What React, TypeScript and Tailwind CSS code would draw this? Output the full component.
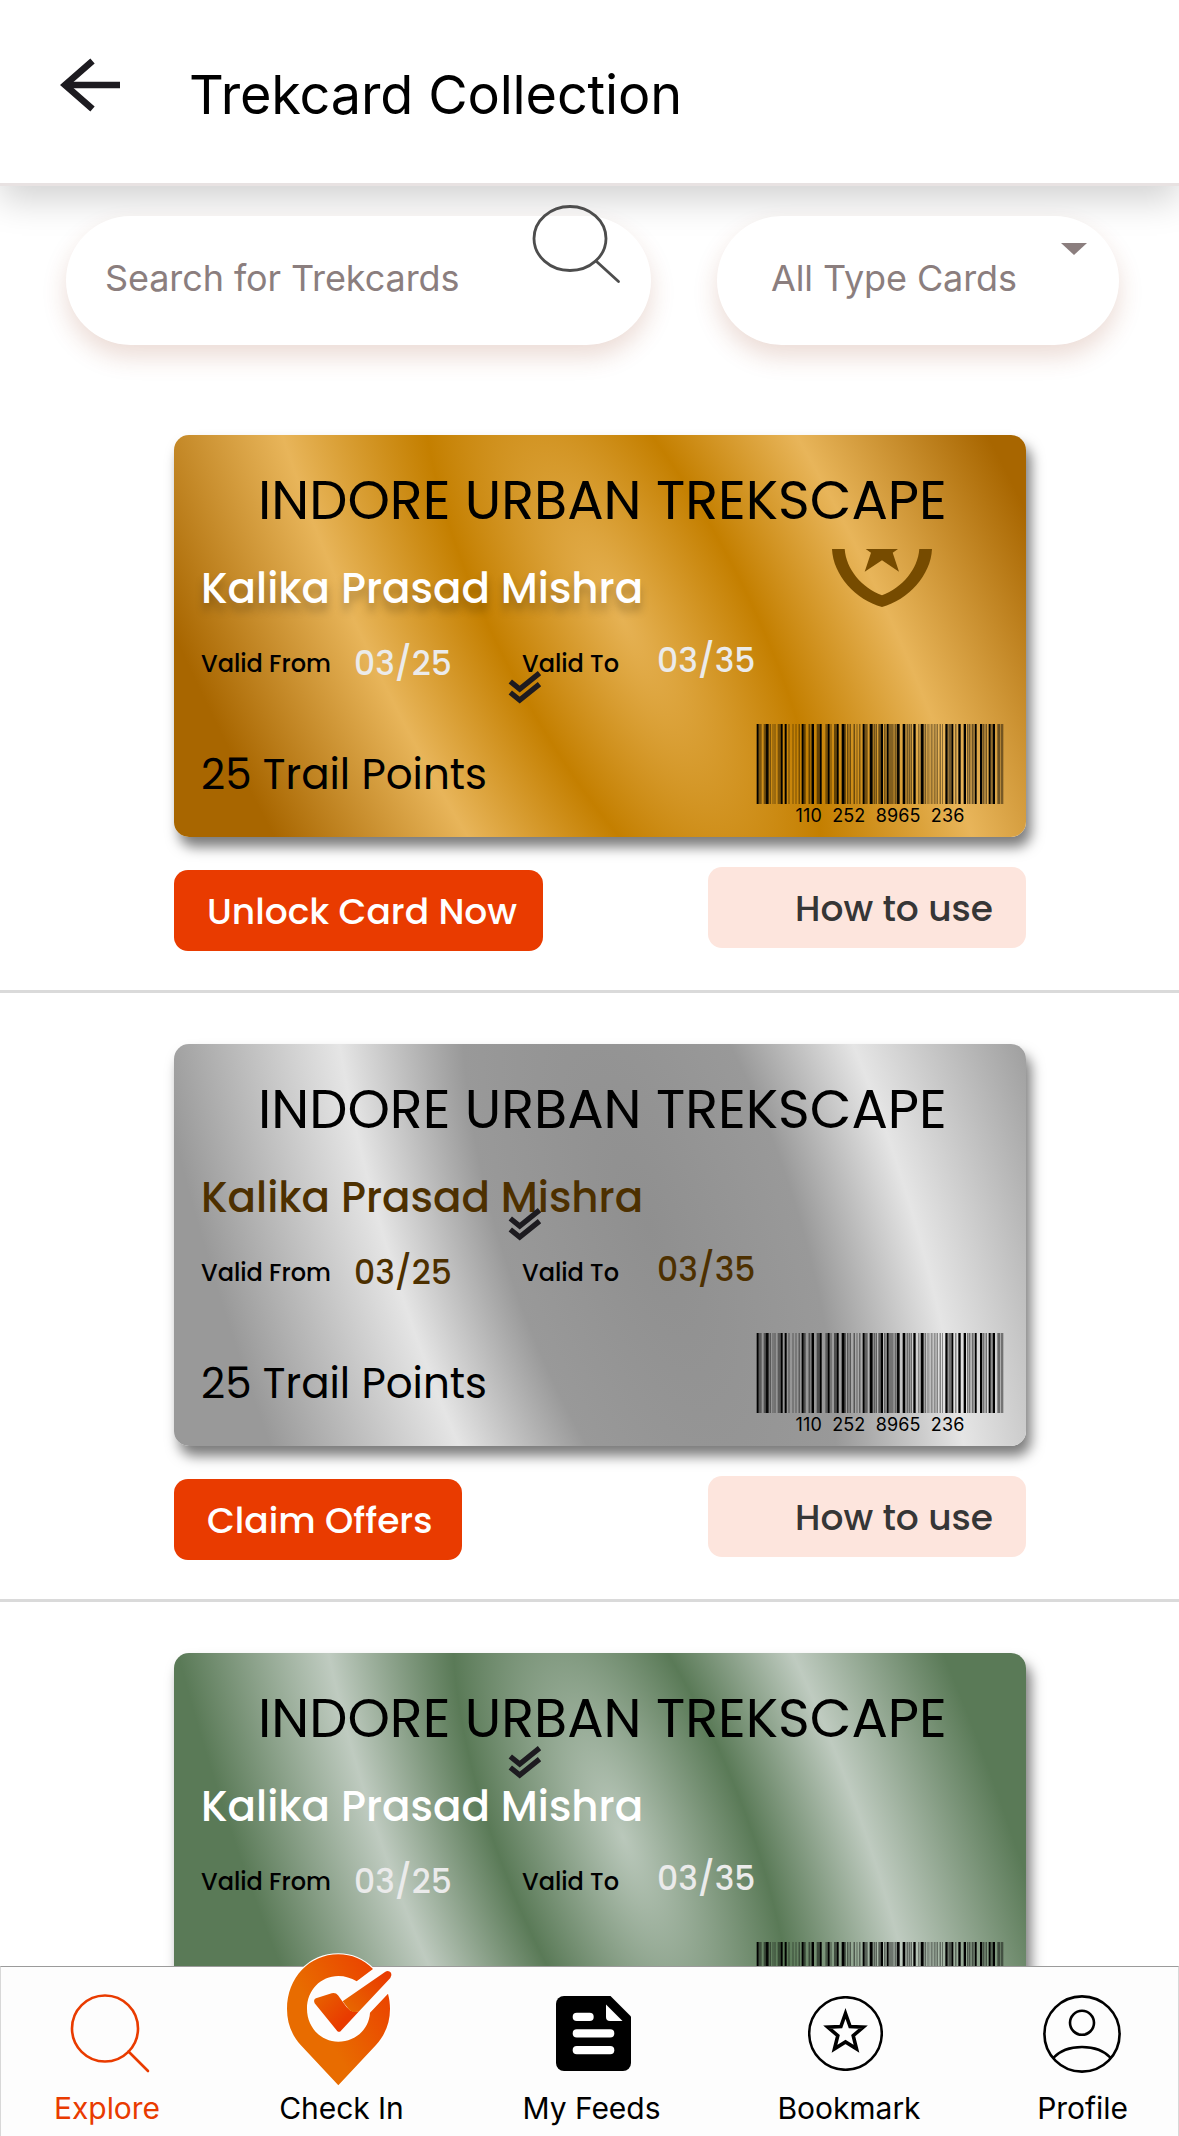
import type { ReactNode } from "react";

type Variant = "gold" | "silver" | "green";

const sheen: Record<Variant, string> = {
  gold: "origin-[746px_184px] skew-x-[24.2deg] bg-[radial-gradient(455px_1073px_at_748px_184px,#e6b254_0%,#c47f00_30%,#e8b55a_59%,#a86600_100%)]",
  silver:
    "origin-[775px_184px] skew-x-[16deg] bg-[radial-gradient(450px_1092px_at_775px_184px,#8f8f8f_0%,#999999_34%,#e5e5e5_59.5%,#999999_100%)]",
  green:
    "origin-[750px_184px] skew-x-[18.8deg] bg-[radial-gradient(390px_954px_at_749px_184px,#bac8bb_0%,#5a7a57_33.5%,#bfcbc0_62.5%,#5a7a57_100%)]",
};

const nameStyle: Record<Variant, string> = {
  gold: "text-white [text-shadow:0_8px_8px_rgba(0,0,0,0.25)]",
  silver: "text-[#4d3000]",
  green: "text-white",
};

const dateStyle: Record<Variant, string> = {
  gold: "text-[#ebebeb]",
  silver: "text-[#4d3000]",
  green: "text-[#ebebeb]",
};

const checkTop: Record<Variant, string> = {
  gold: "top-[235px]",
  silver: "top-[163px]",
  green: "top-[92px]",
};

// [x, width, opacity], in thirds of a pixel
const bars: [number, number, number][] = [
  [2, 6, 1], [8, 9, 0.4], [23, 6, 0.45], [29, 9, 0.95], [41, 3, 0.6], [50, 2, 0.6], [56, 2, 0.7],
  [65, 9, 0.4], [74, 6, 1], [86, 6, 1], [98, 2, 0.7], [110, 2, 0.6], [119, 2, 0.6], [128, 3, 0.6],
  [137, 6, 1], [143, 6, 0.5], [158, 3, 0.7], [164, 4, 0.5], [168, 6, 1], [182, 9, 0.5], [191, 6, 1],
  [208, 7, 0.4], [215, 6, 1], [224, 2, 0.7], [234, 8, 0.5], [242, 6, 1], [257, 9, 1], [268, 2, 0.7],
  [274, 3, 0.7], [281, 3, 0.7], [293, 3, 0.7], [302, 2, 0.6], [310, 3, 0.6], [320, 6, 1], [326, 9, 0.45],
  [341, 9, 1], [353, 3, 0.7], [359, 3, 0.7], [367, 7, 0.5], [374, 7, 1], [384, 5, 0.45], [392, 6, 1],
  [398, 15, 0.4], [416, 3, 0.7], [422, 9, 0.95], [440, 8, 1], [452, 3, 0.7], [458, 3, 0.7], [464, 3, 0.7],
  [472, 7, 1], [487, 3, 0.5], [494, 9, 1], [506, 3, 0.7], [512, 9, 0.25], [524, 6, 0.35], [533, 6, 0.35],
  [542, 3, 0.6], [551, 3, 0.6], [558, 2, 0.6], [568, 7, 1], [577, 8, 0.5], [586, 6, 1], [598, 3, 0.6],
  [607, 7, 1], [623, 7, 1], [634, 3, 0.7], [640, 3, 0.7], [647, 6, 0.5], [656, 6, 1], [672, 7, 1],
  [682, 3, 0.7], [689, 3, 0.7], [698, 6, 1], [706, 3, 0.5], [710, 7, 1], [724, 9, 0.5], [735, 7, 0.45],
];

function Barcode() {
  return (
    <div className="flex w-[248px] flex-col items-center">
      <svg className="h-[80px] w-[248px]" viewBox="0 0 744 240" shapeRendering="geometricPrecision">
        {bars.map(([x, w, o]) => (
          <rect key={x} x={x} y={0} width={w} height={240} fillOpacity={o} />
        ))}
      </svg>
      <p className="mt-[2px] font-['Inter',sans-serif] text-[18px] leading-[20px] tracking-[0.1px] whitespace-pre text-black">
        {"110  252  8965  236"}
      </p>
    </div>
  );
}

function DoubleCheck({ className }: { className: string }) {
  return (
    <svg
      className={`absolute left-[334px] h-[36px] w-[34px] ${className}`}
      viewBox="0 0 34 36"
      fill="none"
      stroke="#1d1b20"
      strokeWidth="5.4"
    >
      <path d="M2.3 11.5 L11.7 19 L31.5 3.2" />
      <path d="M2.3 22.5 L11.7 30 L31.5 14.2" />
    </svg>
  );
}

function Shield() {
  return (
    <svg className="absolute top-[114px] left-[658px] h-[58px] w-[100px]" viewBox="0 0 100 58" fill="#764b00">
      <path d="M0 0C1 26 24 51 50 58C76 51 99 26 100 0H87.3C86 20 70 39 50 46.3C30 39 14 20 12.7 0Z" />
      <path d="M33.7 0H66L60.7 3.7L67 22.7L50 11.3L32.7 22.7L39 3.7Z" />
    </svg>
  );
}

function TrekCard({ variant }: { variant: Variant }) {
  return (
    <div className="relative h-[402px] w-[852px] rounded-[15px] shadow-[5px_10px_13px_rgba(0,0,0,0.52)]">
      <div className="absolute inset-0 overflow-hidden rounded-[15px]">
        <div className={`absolute inset-y-0 -right-[300px] -left-[300px] ${sheen[variant]}`} />
      </div>
      <div className="relative flex h-full flex-col pt-[38px] pr-[22px] pl-[27px]">
        <h2 className="pl-[57px] text-[54px] leading-[54px] whitespace-nowrap text-black">INDORE URBAN TREKSCAPE</h2>
        <p className={`mt-[41px] text-[42px] leading-[42px] font-medium ${nameStyle[variant]}`}>Kalika Prasad Mishra</p>
        <div className="mt-[34px] flex h-[36px] items-start font-medium whitespace-nowrap">
          <span className="mt-[8px] w-[153px] text-[24px] leading-[24px] text-black">Valid From</span>
          <span className={`mt-[3px] w-[168px] text-[33px] leading-[33px] ${dateStyle[variant]}`}>03/25</span>
          <span className="mt-[8px] w-[135px] text-[24px] leading-[24px] text-black">Valid To</span>
          <span className={`text-[33px] leading-[33px] ${dateStyle[variant]}`}>03/35</span>
        </div>
        <div className="mt-[44px] flex items-start justify-between">
          <p className="mt-[30px] text-[42px] leading-[42px] text-black">25 Trail Points</p>
          <Barcode />
        </div>
      </div>
      {variant === "gold" && <Shield />}
      <DoubleCheck className={checkTop[variant]} />
    </div>
  );
}

function CardSection({ variant, children }: { variant: Variant; children?: ReactNode }) {
  return (
    <section className="flex h-[609px] shrink-0 flex-col border-b-[3px] border-[#dadada] pt-[51px] pr-[153px] pl-[174px] font-['Poppins','Lato',sans-serif]">
      <TrekCard variant={variant} />
      {children}
    </section>
  );
}

function CardActions({ action, actionClass }: { action: string; actionClass: string }) {
  return (
    <div className="mt-[30px] flex items-start justify-between text-[36px] leading-[36px] font-medium whitespace-nowrap">
      <button className={`mt-[3px] flex h-[81px] items-center rounded-[14px] bg-[#e93b00] pt-[2px] pl-[33px] text-white ${actionClass}`}>
        {action}
      </button>
      <button className="flex h-[81px] w-[318px] items-center justify-end rounded-[14px] bg-[#fde5dd] pt-[2px] pr-[33px] text-[#363636]">
        How to use
      </button>
    </div>
  );
}

function PinIcon() {
  return (
    <svg className="h-[137px] w-[110px]" viewBox="45 30 330 411">
      <defs>
        <linearGradient id="pinBody" gradientUnits="userSpaceOnUse" x1="150" y1="250" x2="360" y2="130">
          <stop offset="0" stopColor="#e86c00" />
          <stop offset="1" stopColor="#eb4000" />
        </linearGradient>
        <linearGradient id="tickShort" gradientUnits="userSpaceOnUse" x1="145" y1="165" x2="225" y2="240">
          <stop offset="0" stopColor="#e86000" />
          <stop offset="1" stopColor="#e93b00" />
        </linearGradient>
        <linearGradient id="tickLong" gradientUnits="userSpaceOnUse" x1="235" y1="205" x2="345" y2="105">
          <stop offset="0" stopColor="#e86600" />
          <stop offset="1" stopColor="#e93b00" />
        </linearGradient>
      </defs>
      <path
        fill="url(#pinBody)"
        stroke="#fff"
        strokeWidth="7"
        paintOrder="stroke"
        d="M309 87C280 58 245 43 205 43C118 43 51 114 51 207C51 249 65 285 92 315L205 436L318 315C345 285 360 249 360 207C360 191 358 176 354 161L300 218C297 268 256 305 205 305C152 305 111 261 111 206C111 151 152 108 205 108C225 108 243 114 260 124Z"
      />
      <path
        fill="url(#tickShort)"
        d="M138 175L185 160Q197 157 204 166L218 185Q230 203 240 211Q252 218 268 213L213 272Q207 279 201 272L134 190Q129 179 138 175Z"
      />
      <path fill="url(#tickLong)" d="M218 184L345 96Q355 89 363 98Q367 106 361 114L268 213C255 220 243 215 235 206Z" />
    </svg>
  );
}

function NavItem({ label, children, active = false }: { label: string; children: ReactNode; active?: boolean }) {
  return (
    <a className={`flex flex-col items-center ${active ? "text-[#e93b00]" : "text-black"}`}>
      <span className="flex h-[122px] items-end justify-center">{children}</span>
      <span className="text-[30px] leading-[36px] tracking-[-0.05px] whitespace-nowrap">{label}</span>
    </a>
  );
}

function BottomNav() {
  return (
    <nav className="relative z-10 grid h-[170px] shrink-0 grid-cols-[212px_257px_243px_272px_195px] border-x border-t border-x-[#d8d8d8] border-t-[#9b9b9b] bg-[#fdfdfd] pt-px">
      <NavItem label="Explore" active>
        <svg className="mb-[17px] ml-[5px] h-[80px] w-[80px]" viewBox="0 0 80 80" fill="none" stroke="currentColor" strokeWidth="2.6" strokeLinecap="round">
          <ellipse cx="35" cy="35.5" rx="33" ry="33" />
          <path d="M58.5 58.5L78 78" />
        </svg>
      </NavItem>
      <NavItem label="Check In">
        <span className="mr-[3px] mb-[3px] shrink-0">
          <PinIcon />
        </span>
      </NavItem>
      <NavItem label="My Feeds">
        <svg className="mb-[19px] ml-[4px] h-[75px] w-[75px]" viewBox="0 0 75 75">
          <path d="M8 0H54.5L75 20.5V67A8 8 0 0 1 67 75H8A8 8 0 0 1 0 67V8A8 8 0 0 1 8 0Z" />
          <path d="M50 8.5V21A4 4 0 0 0 54 25H66.5Z" fill="#fff" />
          <rect x="16.7" y="16.7" width="21" height="8.3" rx="4.1" fill="#fff" />
          <rect x="16.7" y="33.3" width="41.6" height="8.3" rx="4.1" fill="#fff" />
          <rect x="16.7" y="50" width="41.6" height="8.3" rx="4.1" fill="#fff" />
        </svg>
      </NavItem>
      <NavItem label="Bookmark">
        <svg className="mr-[7px] mb-[19px] h-[75px] w-[75px]" viewBox="0 0 75 75" fill="none" stroke="currentColor">
          <circle cx="37.5" cy="37.5" r="36.3" strokeWidth="2.5" />
          <path
            strokeWidth="3.6"
            d="M37.5 17.5L42.1 30.6L55.2 31.1L45.2 39.7L48.5 52.8L37.5 45.9L26.5 52.8L29.8 39.7L19.8 31.1L32.9 30.6Z"
          />
        </svg>
      </NavItem>
      <NavItem label="Profile">
        <svg className="mr-px mb-[17px] h-[78px] w-[78px]" viewBox="0 0 78 78" fill="none" stroke="currentColor" strokeWidth="2.6">
          <circle cx="39" cy="39" r="37.6" />
          <circle cx="39" cy="27.8" r="12" />
          <path d="M10.2 63C17 55.5 27 52 39 52C51 52 61 55.5 67.8 63" />
        </svg>
      </NavItem>
    </nav>
  );
}

export default function App() {
  return (
    <div className="flex h-[2136px] w-[1179px] flex-col overflow-hidden bg-white font-['Inter',sans-serif] text-black">
      <header className="flex h-[186px] shrink-0 items-start border-b-[3px] border-[#e8e2e2] bg-white pl-[60px] shadow-[0_14px_34px_rgba(0,0,0,0.18)]">
        <svg className="mt-[57px] h-[56px] w-[60px]" viewBox="0 0 60 56" fill="none" stroke="#1d1b20" strokeWidth="6.6">
          <path d="M32.5 4L5 28L32.5 52" />
          <path d="M5 28H60" />
        </svg>
        <h1 className="mt-[65px] ml-[69px] text-[54px] leading-[60px] tracking-[-0.15px] whitespace-nowrap">Trekcard Collection</h1>
      </header>

      <main className="-mt-[186px] flex min-h-0 flex-1 flex-col overflow-hidden pt-[186px]">
        <div className="flex h-[198px] shrink-0 items-start gap-[66px] pt-[30px] pl-[66px] text-[36px] leading-[40px] text-[#8b7e7e]">
          <div className="relative flex h-[129px] w-[585px] items-center rounded-full bg-white pb-[6px] pl-[39px] shadow-[0_12px_24px_rgba(150,60,30,0.18)]">
            <span className="tracking-[-0.1px]">Search for Trekcards</span>
            <svg
              className="absolute top-[-13px] right-[28px] h-[82px] w-[92px]"
              viewBox="0 0 92 82"
              fill="none"
              stroke="#4d4d4d"
              strokeWidth="2.8"
              strokeLinecap="round"
            >
              <ellipse cx="39" cy="35.5" rx="36" ry="32" />
              <path d="M65 58L87.5 78.5" />
            </svg>
          </div>
          <div className="relative flex h-[129px] w-[402px] items-center rounded-full bg-white pb-[6px] pl-[54px] shadow-[0_12px_24px_rgba(150,60,30,0.18)]">
            <span className="tracking-[-0.1px]">All Type Cards</span>
            <svg className="absolute top-[27px] right-[32px] h-[12px] w-[26px]" viewBox="0 0 26 12" fill="#8b7e7e">
              <path d="M0 0H26L13 12Z" />
            </svg>
          </div>
        </div>
        <CardSection variant="gold">
          <CardActions action="Unlock Card Now" actionClass="w-[369px]" />
        </CardSection>
        <CardSection variant="silver">
          <CardActions action="Claim Offers" actionClass="w-[288px]" />
        </CardSection>
        <CardSection variant="green" />
      </main>

      <BottomNav />
    </div>
  );
}
